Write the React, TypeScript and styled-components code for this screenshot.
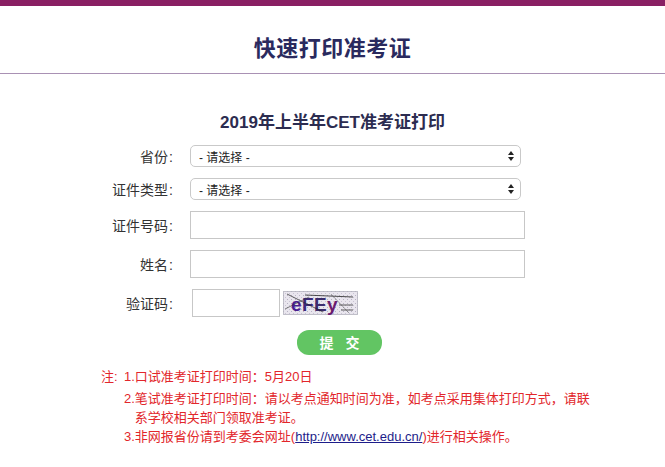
import React from "react";
import styled, { createGlobalStyle } from "styled-components";

const Global = createGlobalStyle`
  html, body { margin: 0; padding: 0; background: #ffffff; }
  body { font-family: "Liberation Sans", "Noto Sans CJK SC", sans-serif; }
  * { box-sizing: border-box; }
`;

const Page = styled.div`
  width: 665px;
  height: 467px;
  overflow: hidden;
  background: #fff;
`;

const TopBar = styled.div`
  height: 6px;
  background: #891f63;
`;

const Header = styled.header`
  height: 68px;
  padding-top: 27px;
  border-bottom: 1px solid #a991b4;
  text-align: center;
`;

const Title = styled.h1`
  margin: 0;
  font-size: 22px;
  line-height: 26px;
  font-weight: 700;
  color: #2a2a5e;
  font-family: "Noto Sans CJK SC", sans-serif;
  letter-spacing: 0.5px;
`;

const SubTitle = styled.h2`
  margin: 37px 0 10px;
  text-align: center;
  font-size: 17px;
  line-height: 24px;
  font-weight: 700;
  color: #2c2c50;
  font-family: "Liberation Sans", "Noto Sans CJK SC", sans-serif;
`;

const Form = styled.form`
  display: flex;
  flex-direction: column;
  gap: 11px;
`;

const Row = styled.div<{ $top?: number }>`
  display: grid;
  grid-template-columns: 173px auto;
  justify-content: start;
  column-gap: 17px;
  align-items: center;
  margin-top: ${(p) => p.$top ?? 0}px;
`;

const Label = styled.label`
  text-align: right;
  font-size: 14px;
  color: #333;
  font-family: "Noto Sans CJK SC", sans-serif;
  white-space: nowrap;
  span { font-family: "Liberation Sans", sans-serif; margin-left: 1px; }
`;

const SelectBox = styled.div`
  width: 331px;
  height: 22px;
  border: 1px solid #c9c9c9;
  border-radius: 5px;
  background: #fff;
  display: flex;
  align-items: center;
  padding: 0 5px 0 8px;
`;

const SelectText = styled.span`
  flex: 1;
  font-size: 12px;
  color: #222;
  font-family: "Liberation Sans", "Noto Sans CJK SC", sans-serif;
`;

const TextInput = styled.input<{ $w: number; $ml?: number }>`
  width: ${(p) => p.$w}px;
  height: 28px;
  border: 1px solid #c7c7c7;
  border-radius: 0;
  margin: 0 0 0 ${(p) => p.$ml ?? 0}px;
  padding: 0 4px;
  background: #fff;
  outline: none;
`;

const CaptchaGroup = styled.div`
  display: flex;
  align-items: center;
  gap: 3px;
`;

const Captcha = styled.svg`
  display: block;
  width: 75px;
  height: 24px;
`;

const Submit = styled.button`
  margin-left: 107px;
  width: 85px;
  height: 25px;
  border: none;
  border-radius: 12px;
  background: #62c563;
  color: #fff;
  font-size: 14px;
  font-weight: 700;
  font-family: "Noto Sans CJK SC", sans-serif;
  letter-spacing: 12px;
  padding: 0 0 0 12px;
  line-height: 25px;
`;

const Notes = styled.div`
  margin-top: 12px;
  margin-left: 101px;
  display: grid;
  grid-template-columns: 23px max-content 460px;
  grid-template-rows: 22px auto auto;
  justify-content: start;
  font-size: 13px;
  line-height: 19px;
  color: #e2262b;
  font-family: "Liberation Sans", "Noto Sans CJK SC", sans-serif;
`;

const NoteCell = styled.div``;

const Link = styled.a`
  color: #1d1d8a;
  text-decoration: underline;
`;

const Arrows = () => (
  <svg width="8" height="12" viewBox="0 0 8 12">
    <path d="M4 1 L7 5 L1 5 Z" fill="#222" />
    <path d="M4 11 L7 7 L1 7 Z" fill="#222" />
  </svg>
);

const CaptchaImage = () => (
  <Captcha viewBox="0 0 75 24">
    <defs>
      <pattern id="noise" width="4" height="4" patternUnits="userSpaceOnUse">
        <rect width="4" height="4" fill="#e9e6ee" />
        <rect x="0" y="0" width="1" height="1" fill="#b8b2c4" />
        <rect x="2" y="2" width="1" height="1" fill="#c9c3d4" />
      </pattern>
    </defs>
    <rect x="0.5" y="0.5" width="74" height="23" fill="url(#noise)" stroke="#8c8c9c" strokeDasharray="1 1" />
    <text x="8" y="20" fontSize="19" fontWeight="700" fontFamily="Liberation Sans, sans-serif" fill="#4a1d91">e</text>
    <text x="19" y="20" fontSize="19" fontWeight="700" fontFamily="Liberation Sans, sans-serif" fill="#3a2a7a">F</text>
    <text x="31" y="20" fontSize="19" fontWeight="700" fontFamily="Liberation Sans, sans-serif" fill="#3b2c6c">E</text>
    <text x="44" y="20" fontSize="19" fontWeight="700" fontFamily="Liberation Sans, sans-serif" fill="#6a1a6e">y</text>
    <path d="M4 3 L40 21" stroke="#222" strokeWidth="0.7" />
    <path d="M2 18 L26 6" stroke="#333" strokeWidth="0.6" />
    <path d="M22 4 L70 6" stroke="#222" strokeWidth="0.8" />
    <path d="M56 14 L70 14 M58 19 L70 19" stroke="#333" strokeWidth="0.8" />
    <path d="M48 3 L66 22" stroke="#555" strokeWidth="0.5" />
  </Captcha>
);

export default function App() {
  return (
    <Page>
      <Global />
      <TopBar />
      <Header>
        <Title>快速打印准考证</Title>
      </Header>
      <SubTitle>2019年上半年CET准考证打印</SubTitle>
      <Form onSubmit={(e) => e.preventDefault()}>
        <Row>
          <Label>省份<span>:</span></Label>
          <SelectBox>
            <SelectText>- 请选择 -</SelectText>
            <Arrows />
          </SelectBox>
        </Row>
        <Row>
          <Label>证件类型<span>:</span></Label>
          <SelectBox>
            <SelectText>- 请选择 -</SelectText>
            <Arrows />
          </SelectBox>
        </Row>
        <Row>
          <Label>证件号码<span>:</span></Label>
          <TextInput $w={335} />
        </Row>
        <Row>
          <Label>姓名<span>:</span></Label>
          <TextInput $w={335} />
        </Row>
        <Row>
          <Label>验证码<span>:</span></Label>
          <CaptchaGroup>
            <TextInput $w={88} $ml={2} />
            <CaptchaImage />
          </CaptchaGroup>
        </Row>
        <Row $top={2}>
          <span />
          <div>
            <Submit type="submit">提交</Submit>
          </div>
        </Row>
      </Form>
      <Notes>
        <NoteCell>注:</NoteCell>
        <NoteCell>1.</NoteCell>
        <NoteCell>口试准考证打印时间：5月20日</NoteCell>
        <NoteCell />
        <NoteCell>2.</NoteCell>
        <NoteCell>笔试准考证打印时间：请以考点通知时间为准，如考点采用集体打印方式，请联系学校相关部门领取准考证。</NoteCell>
        <NoteCell />
        <NoteCell>3.</NoteCell>
        <NoteCell>
          非网报省份请到考委会网址(<Link href="#">http://www.cet.edu.cn/</Link>)进行相关操作。
        </NoteCell>
      </Notes>
    </Page>
  );
}
